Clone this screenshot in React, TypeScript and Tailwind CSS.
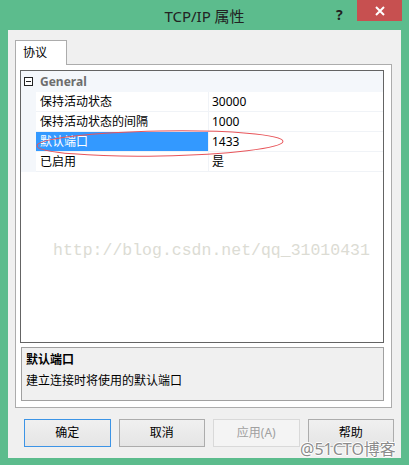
import React from 'react';

const font = { fontFamily: '"Noto Sans", "Noto Sans CJK SC", sans-serif' };

const rows = [
  { name: '保持活动状态', value: '30000' },
  { name: '保持活动状态的间隔', value: '1000' },
  { name: '默认端口', value: '1433', selected: true },
  { name: '已启用', value: '是' },
];

function Btn({ label, primary, disabled }: { label: string; primary?: boolean; disabled?: boolean }) {
  let cls = 'border-[#acacac] bg-gradient-to-b from-[#f0f0f0] to-[#e5e5e5] text-black';
  if (primary) cls = 'border-[#3c94e6] bg-gradient-to-b from-[#f0f0f0] to-[#e5e5e5] text-black';
  if (disabled) cls = 'border-[#d9d9d9] bg-[#f4f4f4] text-[#a0a0a0]';
  return (
    <div className={'w-[87px] h-[28px] border flex items-center justify-center text-[12px] ' + cls}>
      {label}
    </div>
  );
}

export default function App() {
  return (
    <div className="relative w-[409px] h-[465px] bg-[#5cbc8d] overflow-hidden" style={font}>
      {/* title bar */}
      <div className="relative h-[30px] flex items-center justify-center">
        <span className="text-[15px] text-[#222] mt-[2px]">TCP/IP 属性</span>
        <span className="absolute left-[336px] top-[4px] text-[14px] font-bold text-[#222]">?</span>
        <div className="absolute left-[357px] top-0 w-[45px] h-[21px] bg-[#c75050] flex items-center justify-center">
          <svg width="10" height="10" viewBox="0 0 10 10">
            <path d="M1 1 L9 9 M9 1 L1 9" stroke="#fff" strokeWidth="2" />
          </svg>
        </div>
      </div>

      {/* client */}
      <div className="ml-[8px] w-[393px] h-[428px] bg-[#f0f0f0] pt-[10px] px-[7px]">
        <div className="relative z-10 w-[52px] h-[25px] -mb-px bg-white border border-b-0 border-[#acacac] pl-[7px] pt-[3px] text-[12px] text-black">
          协议
        </div>
        <div className="w-[377px] h-[344px] border border-[#acacac] bg-white pt-[5px] px-[4px]">
          {/* property grid */}
          <div className="relative w-[364px] h-[273px] border border-[#646464] bg-white text-[12px]">
            <div className="h-[21px] bg-[#f4f7fb] flex items-center">
              <div className="w-[15px] flex justify-center">
                <svg width="9" height="9" viewBox="0 0 9 9">
                  <rect x="0.5" y="0.5" width="8" height="8" fill="#fff" stroke="#222" />
                  <path d="M2 4.5 H7" stroke="#222" />
                </svg>
              </div>
              <span className="pl-[4px] font-bold text-[#6d6d6d]">General</span>
            </div>
            <div className="flex">
              <div className="w-[15px] bg-[#f4f7fb]" />
              <div className="flex-1">
                {rows.map(r => (
                  <div key={r.name} className="flex h-[20px] border-b border-[#f0f3f7]">
                    <div className={'w-[173px] pl-[4px] flex items-center border-r border-[#f0f3f7] ' + (r.selected ? 'bg-[#3399ff] text-white' : 'text-black')}>
                      {r.name}
                    </div>
                    <div className="flex-1 pl-[3px] flex items-center text-black">{r.value}</div>
                  </div>
                ))}
              </div>
            </div>
            <div
              className="absolute left-[32px] top-[168px] text-[16.5px] text-[#dcdcd4] whitespace-nowrap"
              style={{ fontFamily: '"Liberation Mono", monospace' }}
            >
              http://blog.csdn.net/qq_31010431
            </div>
          </div>
          {/* description */}
          <div className="mt-[4px] ml-[1px] w-[363px] h-[54px] border border-[#a0a0a0] bg-[#f0f0f0] px-[4px] pt-[3px] text-[12px] text-black">
            <div className="font-bold leading-[18px]">默认端口</div>
            <div className="mt-[3px] leading-[18px]">建立连接时将使用的默认端口</div>
          </div>
        </div>
        <div className="mt-[11px] pl-[9px] flex gap-[8px]">
          <Btn label="确定" primary />
          <Btn label="取消" />
          <Btn label="应用(A)" disabled />
          <Btn label="帮助" />
        </div>
      </div>

      {/* annotation ellipse */}
      <svg className="absolute left-0 top-0 pointer-events-none" width="409" height="465">
        <ellipse cx="160" cy="143.5" rx="123" ry="12.5" fill="none" stroke="#e8555a" strokeWidth="1" transform="rotate(-1 160 143.5)" />
      </svg>

      {/* watermark */}
      <div
        className="absolute left-[300px] top-[439px] text-[16px] leading-[20px] text-[#8c8c8c] whitespace-nowrap"
        style={{ textShadow: '1px 0 #fff, -1px 0 #fff, 0 1px #fff, 0 -1px #fff' }}
      >
        @51CTO博客
      </div>
    </div>
  );
}
